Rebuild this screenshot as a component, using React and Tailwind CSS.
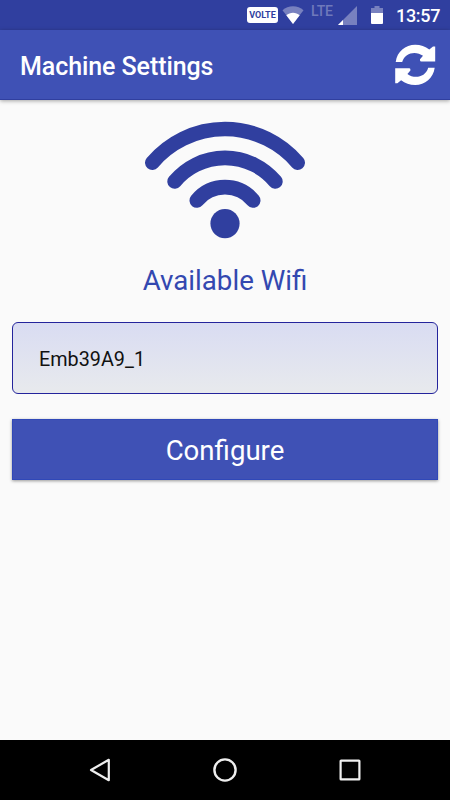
const StatusBar = () => (
  <div className="flex h-[30px] items-start bg-[#303f9f] pl-[247px] text-white">
    <div className="mt-[7px] flex h-4 w-[31px] items-center justify-center rounded-[3px] bg-white pt-px text-[9px] leading-none font-bold text-[#303f9f]">
      VOLTE
    </div>
    <svg className="mt-[6px] ml-1 h-[18px] w-[22px]" viewBox="0 0 22 18">
      <path d="M0.5 4.2C6 -1.2 16 -1.2 21.5 4.2L11 18Z" fill="#7881bf" />
      <path d="M4.3 9.2C8 5.8 14 5.8 17.7 9.2L11 18Z" fill="#fff" />
    </svg>
    <span className="mt-[4px] ml-[7px] w-[24px] text-[14px] leading-[14px] font-medium tracking-[-0.2px] whitespace-nowrap text-[#6f79bb]">
      LTE
    </span>
    <svg className="mt-[6px] ml-[3px] h-[19px] w-[19px]" viewBox="0 0 19 19">
      <path d="M19 0V19H0Z" fill="#7881bf" />
      <path d="M5 14V19H0Z" fill="#fff" />
    </svg>
    <svg className="mt-[6px] ml-[14px] h-[18px] w-3" viewBox="0 0 12 18">
      <path d="M3.5 0H8.5V2H12V7H0V2H3.5Z" fill="#7881bf" />
      <path d="M0 7H12V17Q12 18 11 18H1Q0 18 0 17Z" fill="#fff" />
    </svg>
    <span className="mt-[6px] ml-[13px] text-[18px] leading-5 font-medium tracking-[-0.3px]">
      13:57
    </span>
  </div>
);

const RefreshIcon = () => (
  <svg className="h-[41px] w-[41px]" viewBox="0 0 41 41" fill="#fff">
    <path d="M0.7 18C2 7.5 10.5 0.8 20.2 0.8C25.6 0.8 30.4 2.4 34.3 5.6L38 2.5H40.2V17.5H26.4Q25 17.5 25 16.2V15.2L28 11.8C21.5 6.8 10 8 7.2 18Z" />
    <path
      d="M0.7 18C2 7.5 10.5 0.8 20.2 0.8C25.6 0.8 30.4 2.4 34.3 5.6L38 2.5H40.2V17.5H26.4Q25 17.5 25 16.2V15.2L28 11.8C21.5 6.8 10 8 7.2 18Z"
      transform="rotate(180 20.2 20.9)"
    />
  </svg>
);

const WifiIcon = () => (
  <svg
    className="h-[120px] w-[160px]"
    viewBox="0 0 160 120"
    fill="none"
    stroke="#303f9f"
    strokeWidth="14.6"
    strokeLinecap="round"
  >
    <path d="M7.3 42.7A95.4 95.4 0 0 1 152.7 42.7" />
    <path d="M29.6 61.5A65.6 65.6 0 0 1 130.4 61.5" />
    <path d="M51.8 80.5A36.5 36.5 0 0 1 108.2 80.5" />
    <circle cx="80" cy="103.6" r="14.6" fill="#303f9f" stroke="none" />
  </svg>
);

const NavBar = () => (
  <div className="flex h-[60px] items-center justify-between bg-black px-[88px]">
    <svg className="h-6 w-6" viewBox="0 0 24 24" fill="none" stroke="#eee" strokeWidth="2.2">
      <path d="M20.8 1.8V22.2L3 12Z" strokeLinejoin="round" />
    </svg>
    <svg className="h-6 w-6" viewBox="0 0 24 24" fill="none" stroke="#eee" strokeWidth="2.4">
      <circle cx="12" cy="12" r="10.6" />
    </svg>
    <svg className="h-6 w-6" viewBox="0 0 24 24" fill="none" stroke="#eee" strokeWidth="2.2">
      <rect x="2.6" y="2.6" width="18.8" height="18.8" rx="0.5" />
    </svg>
  </div>
);

export default function App() {
  return (
    <div className="flex h-[800px] w-[450px] flex-col bg-[#fafafa] font-['Roboto',sans-serif]">
      <StatusBar />

      {/* App bar */}
      <header className="flex h-[70px] items-center justify-between border-b border-[#303f9f] bg-[#3f51b5] pr-[14px] pl-5 shadow-[0_1px_4px_rgba(0,0,0,0.35)]">
        <h1 className="pt-1 text-[25px] font-medium tracking-[-0.08px] text-white">
          Machine Settings
        </h1>
        <RefreshIcon />
      </header>

      <main className="flex flex-1 flex-col items-center px-3 pt-5">
        <WifiIcon />
        <h2 className="mt-[21px] text-[27.7px] leading-10 text-[#3348b0]">Available Wifi</h2>

        {/* Network list */}
        <div className="mt-[21px] flex h-[72px] w-full items-center rounded-[6px] border border-[#24249c] bg-linear-to-b from-[#d9dcf2] to-[#e8eaed] pt-[3px] pl-[26px] text-[19.8px] text-[#111]">
          Emb39A9_1
        </div>

        <button className="mt-[25px] h-[61px] w-full border border-[#3048b8] bg-[#3f51b5] pt-[2px] text-[27.6px] text-white shadow-[0_1px_3px_rgba(0,0,0,0.4)]">
          Configure
        </button>
      </main>

      <NavBar />
    </div>
  );
}
